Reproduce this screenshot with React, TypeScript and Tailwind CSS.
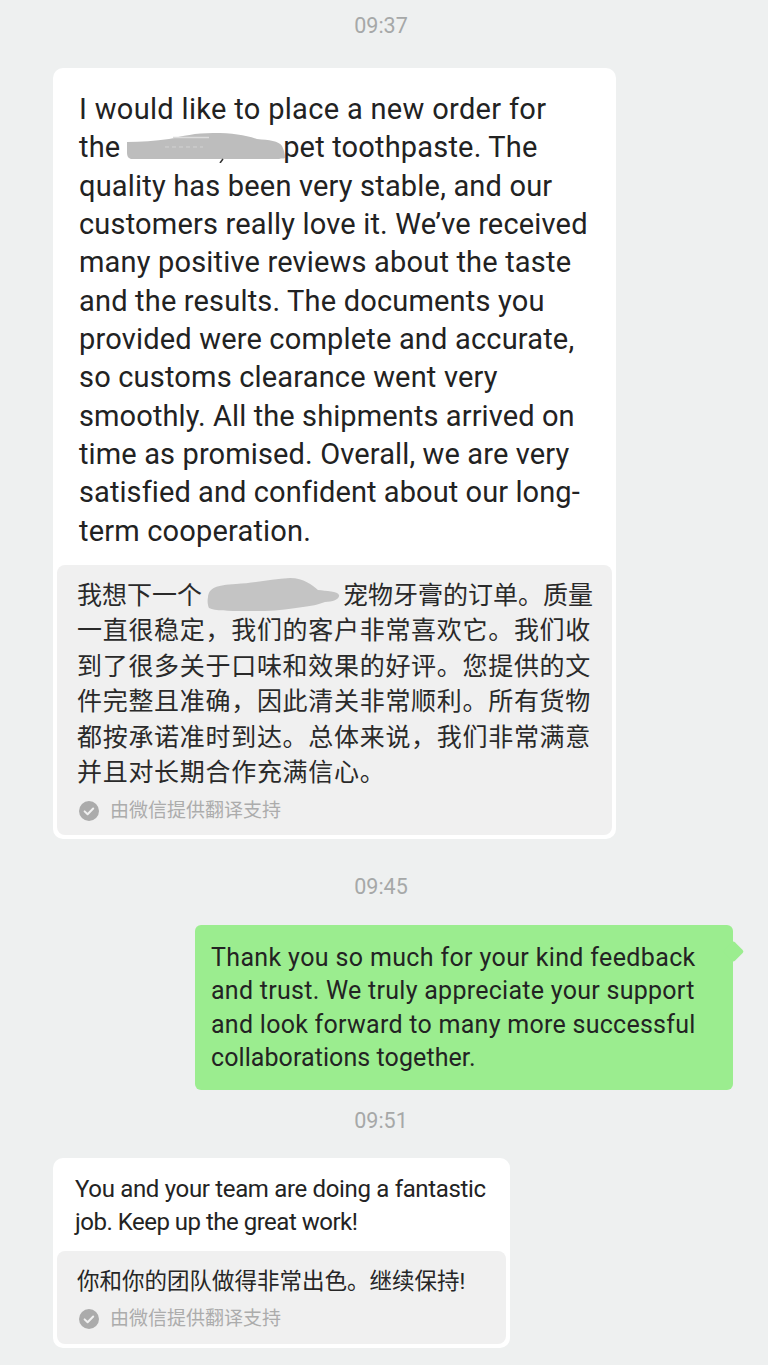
import React from 'react';

const FONT = "font-['Roboto','Noto_Sans_CJK_SC',sans-serif]";

const TimeStamp: React.FC<{ children: React.ReactNode; className?: string }> = ({ children, className }) => (
    <div className={`flex justify-center text-[21.5px] leading-[24px] text-[#a6a8a8] ${className ?? ''}`}>
        <span className="ml-[-6px]">{children}</span>
    </div>
);

const CheckBadge: React.FC = () => (
    <svg viewBox="0 0 20 20" className="w-5 h-5 shrink-0">
        <circle cx="10" cy="10" r="10" fill="#ababab" />
        <path d="M5.6 10.4l3 2.9 5.6-5.8" fill="none" stroke="#f0f0f0" strokeWidth="2" strokeLinecap="round" strokeLinejoin="round" />
    </svg>
);

const Credit: React.FC<{ className?: string }> = ({ className }) => (
    <div className={`flex items-center gap-[11px] pl-[22px] text-[#acacac] text-[19px] leading-[24px] ${className ?? ''}`}>
        <CheckBadge />
        <span>由微信提供翻译支持</span>
    </div>
);

const Lines: React.FC<{ lines: React.ReactNode[] }> = ({ lines }) => (
    <>
        {lines.map((line, i) => (
            <div key={i} className="whitespace-nowrap">{line}</div>
        ))}
    </>
);

export default function App() {
    return (
        <div className={`${FONT} w-[768px] h-[1365px] overflow-hidden bg-[#eef0f0] flex flex-col`}>
            <TimeStamp className="pt-[14px]">09:37</TimeStamp>

            {/* first message */}
            <div className="mt-[30px] ml-[53px] w-[563px] h-[771px] bg-white rounded-[10px] p-[4px] pt-0 flex flex-col">
                <div className="relative pl-[22px] pt-[22px] h-[497px] text-[29px] leading-[38.35px] tracking-[0.18px] text-[#222222]">
                    <Lines
                        lines={[
                            <span className="tracking-[0.32px]">I would like to place a new order for</span>,
                            <>the <span className="inline-block w-[148px]" /> pet toothpaste. The</>,
                            'quality has been very stable, and our',
                            'customers really love it. We’ve received',
                            'many positive reviews about the taste',
                            'and the results. The documents you',
                            'provided were complete and accurate,',
                            'so customs clearance went very',
                            <span className="tracking-[0.1px]">smoothly. All the shipments arrived on</span>,
                            <span className="tracking-[0.13px]">time as promised. Overall, we are very</span>,
                            <span className="tracking-[0.08px]">satisfied and confident about our long-</span>,
                            'term cooperation.',
                        ]}
                    />
                    <svg viewBox="0 0 160 30" className="absolute left-[68px] top-[65px] w-[160px] h-[30px]">
                        <path d="M2 9c14 0 28-1 42-3 14-3 26-6 44-6 20 0 32 2 44 6 12 1 22 2 25 7 2 4 3 8 3 12-2 1-3 0-6 1H6c-3-1-4-3-4-7z" fill="#bdbdbd" />
                        <path d="M48 4.500h36" stroke="#dcdcdc" strokeWidth="1.500" />
                        <path d="M40 14h38" stroke="#d2d2d2" strokeWidth="1" strokeDasharray="4 3" />
                        <path d="M98 26l-3 4" stroke="#333333" strokeWidth="1.500" />
                    </svg>
                </div>
                <div className="flex-1 bg-[#f0f0f0] rounded-[8px] pt-[13px] flex flex-col">
                    <div className="relative pl-[20px] text-[25px] leading-[35.4px] tracking-[0.7px] text-[#2a2a2a]">
                        <Lines
                            lines={[
                                <span className="tracking-normal">我想下一个<span className="inline-block w-[141px]" />宠物牙膏的订单。质量</span>,
                                '一直很稳定，我们的客户非常喜欢它。我们收',
                                '到了很多关于口味和效果的好评。您提供的文',
                                '件完整且准确，因此清关非常顺利。所有货物',
                                '都按承诺准时到达。总体来说，我们非常满意',
                                '并且对长期合作充满信心。',
                            ]}
                        />
                        <svg viewBox="0 0 134 34" className="absolute left-[149px] top-[-1px] w-[134px] h-[34px]">
                            <path d="M2 20C3 11 10 8 30 7c20-1 36-5 54-6 14 0 22 7 28 12 8 1 20 1 21 5 1 4-6 7-14 7-6 2-12 4-22 5-18 3-40 5-60 4-14 0-28 0-34-3C2 29 1 25 2 20z" fill="#c4c4c4" />
                        </svg>
                    </div>
                    <Credit className="mt-[9px]" />
                </div>
            </div>

            <TimeStamp className="mt-[36px]">09:45</TimeStamp>

            {/* reply */}
            <div className="relative mt-[26px] ml-[195px] w-[538px] h-[165px] bg-[#9bed8f] rounded-[6px] pl-[16px] pt-[16px] text-[25px] leading-[33.4px] tracking-[0.27px] text-[#232323]">
                <Lines
                    lines={[
                        <span className="tracking-[0.36px]">Thank you so much for your kind feedback</span>,
                        'and trust. We truly appreciate your support',
                        'and look forward to many more successful',
                        <span className="tracking-[0.08px]">collaborations together.</span>,
                    ]}
                />
                <div className="absolute right-[-8px] top-[19px] w-[15px] h-[15px] rotate-45 bg-[#9bed8f] rounded-[2px]" />
            </div>

            <TimeStamp className="mt-[19px]">09:51</TimeStamp>

            {/* last message */}
            <div className="mt-[25px] ml-[53px] w-[457px] h-[190px] bg-white rounded-[10px] p-[4px] pt-0 flex flex-col">
                <div className="h-[93px] pl-[18px] pt-[15px] text-[24px] leading-[33px] tracking-[-0.33px] text-[#232323]">
                    <Lines lines={['You and your team are doing a fantastic', <span className="tracking-[-0.5px]">job. Keep up the great work!</span>]} />
                </div>
                <div className="flex-1 bg-[#f0f0f0] rounded-[8px] pt-[14px] flex flex-col">
                    <div className="pl-[20px] text-[22.500px] leading-[33px] text-[#262626] whitespace-nowrap">你和你的团队做得非常出色。继续保持!</div>
                    <Credit className="mt-[9px]" />
                </div>
            </div>
        </div>
    );
}
